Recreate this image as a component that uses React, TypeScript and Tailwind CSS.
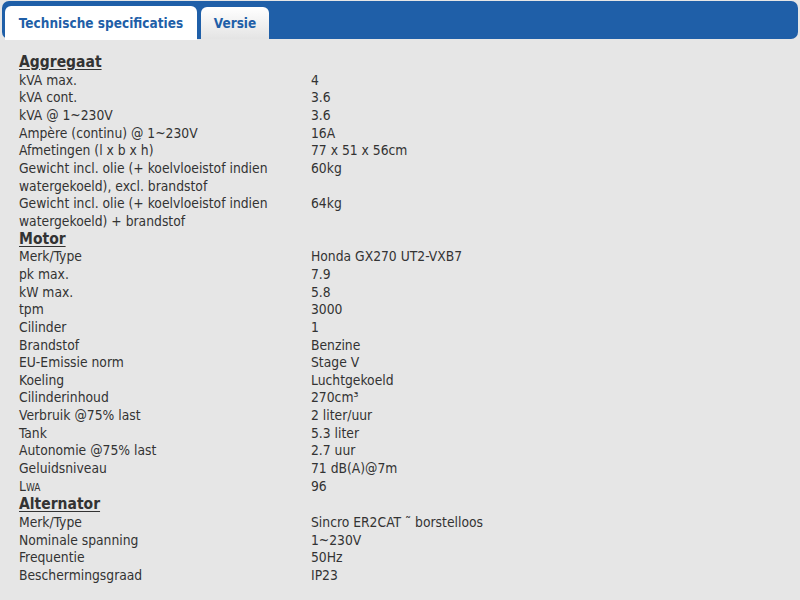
import React from "react";

type Row = { label: React.ReactNode; value: string };
type Section = { title: string; rows: Row[] };

const SECTIONS: Section[] = [
  {
    title: "Aggregaat",
    rows: [
      { label: "kVA max.", value: "4" },
      { label: "kVA cont.", value: "3.6" },
      { label: "kVA @ 1~230V", value: "3.6" },
      { label: "Ampère (continu) @ 1~230V", value: "16A" },
      { label: "Afmetingen (l x b x h)", value: "77 x 51 x 56cm" },
      { label: "Gewicht incl. olie (+ koelvloeistof indien watergekoeld), excl. brandstof", value: "60kg" },
      { label: "Gewicht incl. olie (+ koelvloeistof indien watergekoeld) + brandstof", value: "64kg" },
    ],
  },
  {
    title: "Motor",
    rows: [
      { label: "Merk/Type", value: "Honda GX270 UT2-VXB7" },
      { label: "pk max.", value: "7.9" },
      { label: "kW max.", value: "5.8" },
      { label: "tpm", value: "3000" },
      { label: "Cilinder", value: "1" },
      { label: "Brandstof", value: "Benzine" },
      { label: "EU-Emissie norm", value: "Stage V" },
      { label: "Koeling", value: "Luchtgekoeld" },
      { label: "Cilinderinhoud", value: "270cm³" },
      { label: "Verbruik @75% last", value: "2 liter/uur" },
      { label: "Tank", value: "5.3 liter" },
      { label: "Autonomie @75% last", value: "2.7 uur" },
      { label: "Geluidsniveau", value: "71 dB(A)@7m" },
      {
        label: (
          <>
            L<span className="text-[10px]">WA</span>
          </>
        ),
        value: "96",
      },
    ],
  },
  {
    title: "Alternator",
    rows: [
      { label: "Merk/Type", value: "Sincro ER2CAT ˜ borstelloos" },
      { label: "Nominale spanning", value: "1~230V" },
      { label: "Frequentie", value: "50Hz" },
      { label: "Beschermingsgraad", value: "IP23" },
    ],
  },
];

export default function App() {
  return (
    <div className="h-[600px] w-[800px] overflow-hidden bg-[#e6e6e6] font-['DejaVu_Sans_Condensed','DejaVu_Sans',sans-serif] text-[#333]">
      <div className="px-[2px] pt-[1px]">
        <div className="flex h-[38px] items-end gap-[4px] rounded-[7px] bg-[#1f5fa8] pl-[3px]">
          <div className="mb-[-1px] flex h-[34px] w-[192px] items-center justify-center rounded-t-[6px] bg-white text-[13.5px] font-bold text-[#1f5fa8]">
            Technische specificaties
          </div>
          <div className="flex h-[32px] w-[68px] items-center justify-center rounded-t-[6px] bg-gradient-to-b from-white to-[#e4e4e4] text-[13.5px] font-bold text-[#1f5fa8]">
            Versie
          </div>
        </div>
      </div>
      <div className="px-[19px] pt-[15px]">
        {SECTIONS.map((s) => (
          <div key={s.title}>
            <div className="text-[15.5px] font-bold leading-[17.65px] underline underline-offset-[2px]">{s.title}</div>
            {s.rows.map((r, i) => (
              <div key={i} className="grid grid-cols-[292px_1fr] text-[13.75px] leading-[17.65px]">
                <div className="pr-[20px]">{r.label}</div>
                <div>{r.value}</div>
              </div>
            ))}
          </div>
        ))}
      </div>
    </div>
  );
}
